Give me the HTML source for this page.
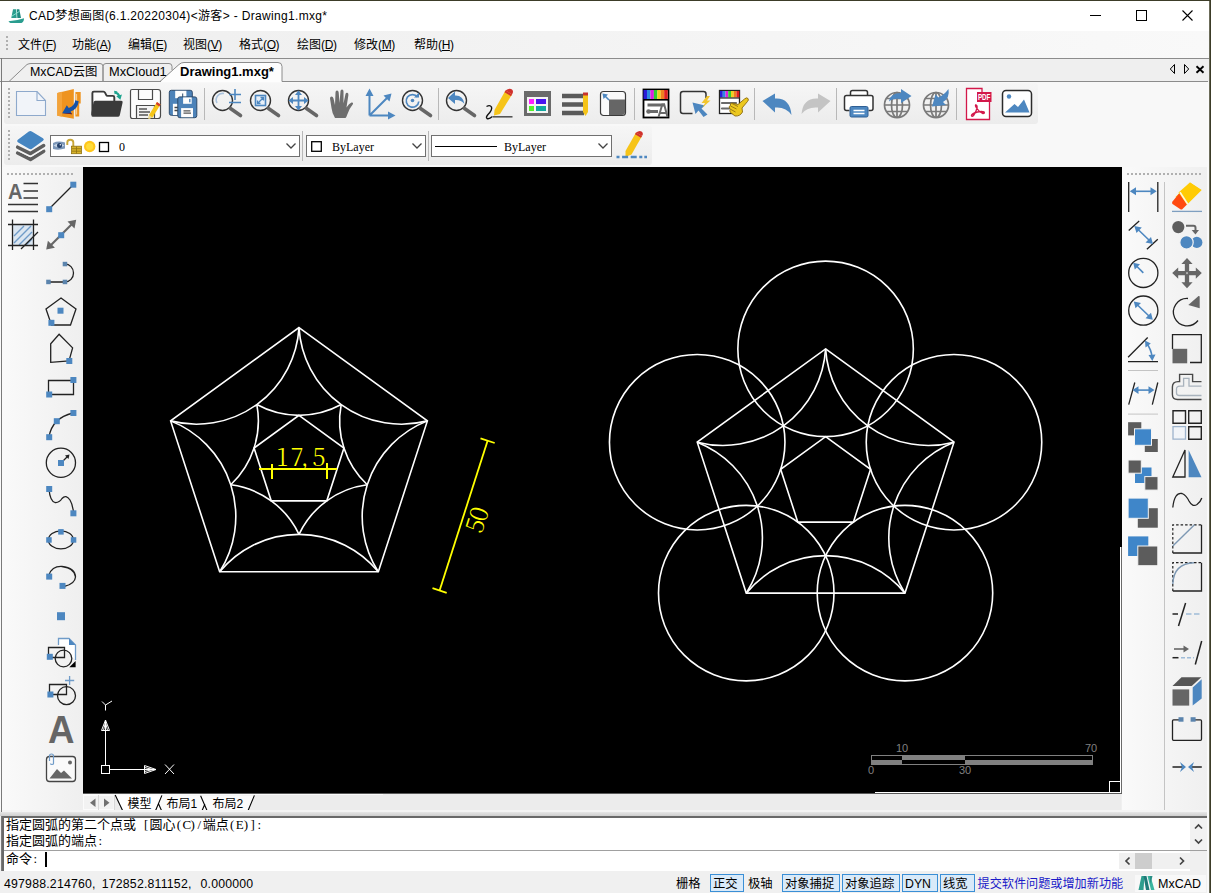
<!DOCTYPE html>
<html lang="zh-CN">
<head>
<meta charset="utf-8">
<title>CAD梦想画图</title>
<style>
*{box-sizing:border-box;margin:0;padding:0}
html,body{width:1211px;height:893px;overflow:hidden;background:#f0f0f0}
body{position:relative;font-family:"Liberation Sans","Noto Sans CJK SC",sans-serif;font-size:12px;color:#000}
.abs{position:absolute}
#win{position:absolute;left:0;top:0;width:1211px;height:893px;background:#f0f0f0;overflow:hidden}
#topline{position:absolute;left:0;top:0;width:1211px;height:1px;background:#3c3c28}
#title{position:absolute;left:0;top:1px;width:1211px;height:30px;background:#fff}
#title .txt{position:absolute;left:29px;top:7px;font-size:12px;line-height:16px;white-space:nowrap;color:#000;letter-spacing:0.33px}
#menubar{position:absolute;left:0;top:31px;width:1211px;height:27px;background:linear-gradient(to right,#eeeeee,#f9f9f9)}
#menubar .mi{position:absolute;top:6px;font-size:12px;line-height:16px;white-space:nowrap}
.ml{letter-spacing:-0.4px}
#menubar u{text-decoration:underline;text-underline-offset:1px}
.grip-v{position:absolute;width:2px;background-image:repeating-linear-gradient(to bottom,#b0b0b0 0 2px,transparent 2px 4px)}
.grip-h{position:absolute;height:2px;background-image:repeating-linear-gradient(to right,#b0b0b0 0 2px,transparent 2px 4px)}
#tabbar{position:absolute;left:0;top:58px;width:1211px;height:25px;background:#efefef;border-top:1px solid #8c8c8c}
#tabline{position:absolute;left:0;top:81px;width:1211px;height:1px;background:#8c8c8c}
.sep{position:absolute;width:1px;background:#b8b8b8}
#tb1{position:absolute;left:4px;top:83px;width:1034px;height:41px;background:linear-gradient(#f6f6f6,#ececec);border-radius:3px}
#tb2{position:absolute;left:4px;top:126px;width:648px;height:39px;background:linear-gradient(#f6f6f6,#ececec);border-radius:3px}
#tbbg{position:absolute;left:0;top:82px;width:1211px;height:85px;background:#f8f8f8}
.combo{position:absolute;height:22px;background:#fff;border:1px solid #707070}
.combo .arrow{position:absolute;right:2px;top:5px;width:12px;height:10px}
.simsun{font-family:"Liberation Serif","Noto Serif CJK SC",serif}
#leftbar{position:absolute;left:0;top:167px;width:83px;height:643px;background:linear-gradient(to right,#fafafa,#efefef)}
#rightbar{position:absolute;left:1122px;top:167px;width:89px;height:643px;background:linear-gradient(to right,#fafafa,#efefef)}
#canvas{position:absolute;left:83px;top:167px;width:1039px;height:627px;background:#000;overflow:hidden}
#laytabs{position:absolute;left:83px;top:794px;width:1038px;height:17px;background:#ececec}
#cmd{position:absolute;left:2px;top:816px;width:1205px;height:55px;background:#fff;border-top:2px solid #696969;border-left:2px solid #696969}
#status{position:absolute;left:0;top:872px;width:1211px;height:21px;background:#f0f0f0}
.icon{position:absolute;overflow:visible}
</style>
</head>
<body>
<div id="win">
<div id="title">
<svg class="icon" style="left:8px;top:7px" width="16" height="16" viewBox="0 0 16 16"><path d="M3.300 10 L5 1.200 L8.200 1.200 L8.700 10 Z" fill="#2a9d8f"/><path d="M8.900 1.200 L11.300 1.200 L13 10 L9.300 10 Z" fill="#1f8a80"/><path d="M3.600 8.300 L11.600 3.300" stroke="#8fe6d6" stroke-width="0.900"/><path d="M0.500 13.300 Q8 13 16 10.300 Q16 14 13.500 15 L2.500 15 Q1 14.500 0.500 13.300 Z" fill="#2a9d8f"/></svg>
<div class="txt">CAD梦想画图(6.1.20220304)&lt;游客&gt; - Drawing1.mxg*</div>
<svg class="icon" style="left:1090px;top:14px" width="11" height="1"><rect width="11" height="1" fill="#000"/></svg>
<svg class="icon" style="left:1136px;top:9px" width="11" height="11"><rect x="0.5" y="0.5" width="10" height="10" fill="none" stroke="#000"/></svg>
<svg class="icon" style="left:1182px;top:9px" width="11" height="11"><path d="M0.500 0.500 L10.500 10.500 M10.500 0.500 L0.500 10.500" stroke="#000" stroke-width="1.1" fill="none"/></svg>
</div>
<div id="menubar">
<div class="grip-v" style="left:6px;top:5px;height:16px"></div>
<div class="mi" style="left:18px">文件<span class="ml">(<u>F</u>)</span></div>
<div class="mi" style="left:72px">功能<span class="ml">(<u>A</u>)</span></div>
<div class="mi" style="left:128px">编辑<span class="ml">(<u>E</u>)</span></div>
<div class="mi" style="left:183px">视图<span class="ml">(<u>V</u>)</span></div>
<div class="mi" style="left:239px">格式<span class="ml">(<u>O</u>)</span></div>
<div class="mi" style="left:297px">绘图<span class="ml">(<u>D</u>)</span></div>
<div class="mi" style="left:354px">修改<span class="ml">(<u>M</u>)</span></div>
<div class="mi" style="left:414px">帮助<span class="ml">(<u>H</u>)</span></div>
</div>
<div id="tabbar">
<svg class="icon" style="left:0;top:0" width="300" height="24" viewBox="0 0 300 24">
<path d="M9 22.500 L27 5.500 Q29 4.500 31 4.500 L100 4.500 Q103 4.500 103 7.500 L103 22.500" fill="#f0f0f0" stroke="#8c8c8c"/>
<path d="M103 22.500 L103 7.500 Q103 4.500 106 4.500 L169 4.500 Q172 4.500 172 7.500 L172 11" fill="none" stroke="#8c8c8c"/>
<path d="M160 23.500 L179 5.500 Q181 3.500 184 3.500 L278 3.500 Q282 3.500 282 7.500 L282 23.500 Z" fill="#fdfdfd" stroke="none"/>
<path d="M160 22.500 L179 5.500 Q181 3.500 184 3.500 L278 3.500 Q282 3.500 282 7.500 L282 22.500" fill="none" stroke="#8c8c8c"/>
</svg>
<div class="abs" style="left:30px;top:5px;font-size:12.4px;line-height:17px;white-space:nowrap">MxCAD云图</div>
<div class="abs" style="left:109px;top:4px;font-size:12.8px;line-height:17px;white-space:nowrap">MxCloud1</div>
<div class="abs" style="left:180px;top:4px;font-size:13px;line-height:17px;font-weight:bold;white-space:nowrap">Drawing1.mxg*</div>
<svg class="icon" style="left:1168px;top:5px" width="40" height="12" viewBox="0 0 40 12"><path d="M6.500 0.500 V9.500 L2.300 5 Z" fill="none" stroke="#000" stroke-width="1"/><path d="M16.500 0.500 V9.500 L20.700 5 Z" fill="none" stroke="#000" stroke-width="1"/><path d="M28.500 2.300 L35.500 8.700 M35.500 2.300 L28.500 8.700" stroke="#000" stroke-width="1.900" fill="none"/></svg>
</div>
<div class="abs" style="left:0;top:81px;width:161px;height:1px;background:#8c8c8c"></div><div class="abs" style="left:282px;top:81px;width:926px;height:1px;background:#8c8c8c"></div>
<div id="tbbg"></div><div id="tb1"></div>
<div class="grip-v" style="left:8px;top:88px;height:30px"></div>
<div class="sep" style="left:204px;top:88px;height:32px"></div>
<div class="sep" style="left:438px;top:88px;height:32px"></div>
<div class="sep" style="left:634px;top:88px;height:32px"></div>
<div class="sep" style="left:754px;top:88px;height:32px"></div>
<div class="sep" style="left:836px;top:88px;height:32px"></div>
<div class="sep" style="left:956px;top:88px;height:32px"></div>
<svg class="icon" style="left:16px;top:88px" width="32" height="32" viewBox="0 0 32 32"><path d="M0.500 3.500 H21 L29.500 12.500 V27.500 H0.500 Z" fill="#f1f4f9" stroke="#8ea9cc" stroke-width="1.100"/><path d="M21 3.500 V12.500 H29.500" fill="none" stroke="#8ea9cc" stroke-width="1.100"/></svg>
<svg class="icon" style="left:54px;top:88px" width="32" height="32" viewBox="0 0 32 32"><path d="M3.300 4.900 L19.800 1 V30.700 L3.300 27.700 Z" fill="#ee931f"/><path d="M3.300 4.900 L8 3.800 V28.500 L3.300 27.700 Z" fill="#f3a33a"/><path d="M21.400 3.900 H26.700 V15.500 H25.200 V28.400 H21.400 Z" fill="#ee931f"/><path d="M22.600 6 V26.500" stroke="#f9d9ac" stroke-width="0.900"/><path d="M8.200 25.300 L12.800 17.300 L14.800 20.100 Q20.500 18 21.300 12.300 L24.700 13.300 Q23.800 21.200 16.600 23.600 L18 26.300 Z" fill="#1552a8"/><path d="M8.200 25.300 L18 26.300 L17.300 25 Z" fill="#7a2020"/></svg>
<svg class="icon" style="left:92px;top:88px" width="32" height="32" viewBox="0 0 32 32"><path d="M0.400 27 V5 Q0.400 3.600 1.800 3.600 H11.500 Q12.500 3.600 13 4.600 L14.300 7.200 Q14.600 7.900 15.600 7.900 H20.800 Q22.300 7.900 22.300 9.400 V13" fill="#fdfdfd" stroke="#3a3a3a" stroke-width="1.900" stroke-linejoin="round"/><path d="M3.300 12.800 H29.300 Q31 12.800 30.600 14.500 L27.800 27.200 Q27.400 28.700 25.800 28.700 H1 Q-0.600 28.700 -0.600 27.200 V25 L1.500 14.300 Q1.800 12.800 3.300 12.800 Z" fill="#3a3a3a"/><path d="M22.800 4.300 Q26.500 5 27.300 8.500" fill="none" stroke="#1ea48f" stroke-width="2.200"/><path d="M24.300 8.300 L29.900 6.500 L28.400 11.800 Z" fill="#1ea48f"/><path d="M22 2.700 L25.500 3.500 L22.800 6.300 Z" fill="#1ea48f"/></svg>
<svg class="icon" style="left:130px;top:88px" width="32" height="32" viewBox="0 0 32 32"><path d="M2 1.5 H28 Q30.5 1.5 30.5 4 V28 Q30.5 30.5 28 30.5 H2.5 Q0.5 30.5 0.5 28.5 V3 Q0.5 1.5 2 1.5 Z" fill="#fcfcfc" stroke="#4a4a4a" stroke-width="1.2"/><path d="M8.5 1.5 V11.5 H22.5 V1.5" fill="none" stroke="#4a4a4a" stroke-width="1.2"/><path d="M6.5 30 V17.5 H24.5 V30" fill="#f3f3f3" stroke="#4a4a4a" stroke-width="1.2"/><path d="M9 21 H17 M9 24 H20 M9 27 H18" stroke="#555" stroke-width="1.6"/><path d="M27 14 L30.5 16.5 L22.5 29.5 L18.5 31 L19 27 Z" fill="#f5c518"/><path d="M27 14 L30.5 16.5 L29.3 18.5 L25.8 16 Z" fill="#d43a2f"/><path d="M18.5 31 L19 27 L22.5 29.5 Z" fill="#e8d9a0"/></svg>
<svg class="icon" style="left:168px;top:88px" width="32" height="32" viewBox="0 0 32 32"><rect x="1.300" y="2.300" width="23" height="25" rx="2" fill="#4d83b9" stroke="#2d4a6b" stroke-width="1"/><rect x="7.200" y="2.800" width="11.200" height="7.400" fill="#fdfdfd"/><rect x="4.900" y="15.800" width="6" height="11.200" fill="#fdfdfd"/><path d="M6.500 19.500 H10 M6.500 22.500 H10" stroke="#444" stroke-width="1.300"/><rect x="9.800" y="8.900" width="19" height="20.800" rx="2" fill="#4d83b9" stroke="#2d4a6b" stroke-width="1"/><rect x="15.100" y="9.400" width="8.600" height="6.400" fill="#fdfdfd"/><rect x="21.100" y="10.900" width="1.400" height="3.400" fill="#4d83b9"/><path d="M14.700 5.500 V9" stroke="#2d4a6b" stroke-width="1"/><rect x="13.100" y="20.100" width="11.900" height="9.100" fill="#fdfdfd"/><path d="M15.500 22.800 H22.400 M15.500 25.200 H23" stroke="#555" stroke-width="1.200"/></svg>
<svg class="icon" style="left:212px;top:88px" width="32" height="32" viewBox="0 0 32 32"><circle cx="10.5" cy="12.5" r="10" fill="none" stroke="#333333" stroke-width="1.4"/><path d="M18.5 20.5 L28.5 27.5" stroke="#666666" stroke-width="3.6" stroke-linecap="round"/><path d="M5 15 A6.5 6.5 0 0 1 12 5.5" fill="none" stroke="#a9c3de" stroke-width="1.6"/><path d="M17 6.5 H29 M23 1 V12 M17 14.5 H29" stroke="#4d87c0" stroke-width="1.6"/></svg>
<svg class="icon" style="left:250px;top:88px" width="32" height="32" viewBox="0 0 32 32"><circle cx="10.5" cy="12.5" r="10" fill="none" stroke="#333333" stroke-width="1.4"/><path d="M18.5 20.5 L28.5 27.5" stroke="#666666" stroke-width="3.6" stroke-linecap="round"/><rect x="5.5" y="7.5" width="10" height="10" fill="#e8f0f8" stroke="#4d87c0" stroke-width="1.6"/><path d="M8 15 L13 10 M10.5 9.5 H13.5 V12.5 M7.5 12.5 V15.5 H10.5" stroke="#4d87c0" stroke-width="1.3" fill="none"/></svg>
<svg class="icon" style="left:288px;top:88px" width="32" height="32" viewBox="0 0 32 32"><circle cx="10.5" cy="12.5" r="10" fill="none" stroke="#333333" stroke-width="1.4"/><path d="M18.5 20.5 L28.5 27.5" stroke="#666666" stroke-width="3.6" stroke-linecap="round"/><path d="M10.5 5 V20 M3 12.5 H18" stroke="#4d87c0" stroke-width="1.8"/><path d="M10.5 2.5 L14 7 H7 Z M10.5 22.5 L14 18 H7 Z M0.5 12.5 L5 9 V16 Z M20.5 12.5 L16 9 V16 Z" fill="#4d87c0"/></svg>
<svg class="icon" style="left:326px;top:88px" width="32" height="32" viewBox="0 0 32 32"><path d="M9 30 Q6 25 5.5 20 L4 10.5 Q4 8.5 5.5 8.5 Q7 8.5 7.5 10.5 L9 17 L9.5 4.5 Q9.5 2.5 11 2.5 Q12.5 2.5 12.7 4.5 L13.5 15 L14.5 3 Q14.7 1.5 16 1.5 Q17.5 1.5 17.5 3.5 L17.5 15.5 L19.5 6 Q20 4.5 21.3 4.8 Q22.6 5.1 22.4 7 L20.5 19.5 Q23 15.5 25.5 14.5 Q27.5 14 27 16 Q23 21 21.5 26 Q20.5 29 19.5 30 Z" fill="#6e6e6e"/></svg>
<svg class="icon" style="left:364px;top:88px" width="32" height="32" viewBox="0 0 32 32"><path d="M5.5 27.5 V5 M5.5 27.5 H27 M5.5 27.5 L24 9" stroke="#4d87c0" stroke-width="2" fill="none"/><path d="M5.5 0.5 L9.5 8 H1.5 Z M31.5 27.5 L24 23.5 V31.5 Z M27.5 5.5 L19.5 7.5 L25.5 13.5 Z" fill="#4d87c0"/></svg>
<svg class="icon" style="left:402px;top:88px" width="32" height="32" viewBox="0 0 32 32"><circle cx="10.5" cy="12.5" r="10" fill="none" stroke="#333333" stroke-width="1.4"/><path d="M18.5 20.5 L28.5 27.5" stroke="#666666" stroke-width="3.6" stroke-linecap="round"/><path d="M15.5 9 A6.3 6.3 0 1 0 16.8 13.5" fill="none" stroke="#4d87c0" stroke-width="1.7"/><path d="M12 9.5 H17 V4.5 Z" fill="#4d87c0"/><circle cx="10.5" cy="12.5" r="1.8" fill="#4d87c0"/></svg>
<svg class="icon" style="left:446px;top:88px" width="32" height="32" viewBox="0 0 32 32"><circle cx="10.5" cy="12.5" r="10" fill="none" stroke="#333333" stroke-width="1.4"/><path d="M18.5 20.5 L28.5 27.5" stroke="#666666" stroke-width="3.6" stroke-linecap="round"/><path d="M2 10 L9 3.5 V7.5 Q17 7 18.5 16 Q15 11.5 9 12 V16 Z" fill="#4d87c0"/></svg>
<svg class="icon" style="left:484px;top:88px" width="32" height="32" viewBox="0 0 32 32"><path d="M2.500 18.500 Q6 16.500 7.500 19 Q8.500 22 4 26.500 Q1.500 29.500 3 30.500 Q5 31.500 8.500 28.500" fill="none" stroke="#111" stroke-width="1.400"/><path d="M9 28.800 H28.500" stroke="#555" stroke-width="1.600"/><path d="M21.5 2.5 L28 6.5 L16 26 L10 27.5 L10.5 22 Z" fill="#f6c419"/><path d="M21.5 2.5 Q25.5 -0.5 28 1.5 Q30 3.5 28 6.5 Z" fill="#d0312d"/><path d="M21.5 2.5 L28 6.5 L27 8.2 L20.5 4.2 Z" fill="#d0312d"/></svg>
<svg class="icon" style="left:522px;top:88px" width="32" height="32" viewBox="0 0 32 32"><rect x="2" y="3" width="27" height="25" fill="#6a6a6a"/><rect x="5" y="9" width="21" height="16" fill="#f4f4f4"/><rect x="7" y="11" width="5" height="5" fill="#ff20ff"/><rect x="14" y="11" width="10" height="5" fill="#4a14f0"/><rect x="7" y="18" width="5" height="5" fill="#55f22a"/><rect x="14" y="18" width="10" height="5" fill="#12a8a0"/></svg>
<svg class="icon" style="left:560px;top:88px" width="32" height="32" viewBox="0 0 32 32"><path d="M2 8 H24 M2 16.5 H24 M2 25 H24" stroke="#5a5a5a" stroke-width="4.6"/><path d="M23 6 H28 V24 L25.5 28 L23 24 Z" fill="#f6c419"/><rect x="23" y="4.5" width="5" height="3" fill="#c8322d"/></svg>
<svg class="icon" style="left:598px;top:88px" width="32" height="32" viewBox="0 0 32 32"><rect x="2.5" y="3.5" width="25" height="24" rx="3" fill="#fafafa" stroke="#3a3a3a" stroke-width="1.2"/><path d="M11 11.5 H27 V24 Q27 27 24 27 H11 Z" fill="#666"/><path d="M11 12 L6.5 7.5" stroke="#4d87c0" stroke-width="1.6"/><path d="M4.5 5.5 L10 6.5 L5.5 11 Z" fill="#4d87c0"/></svg>
<svg class="icon" style="left:642px;top:88px" width="32" height="32" viewBox="0 0 32 32"><rect x="1.500" y="1.500" width="25" height="28" fill="#fff" stroke="#000" stroke-width="1.800"/><rect x="1.5" y="2" width="3.5" height="9.500" fill="#2a1ad8"/><rect x="4.95" y="2" width="3.5" height="9.500" fill="#2f8ae0"/><rect x="8.4" y="2" width="3.5" height="9.500" fill="#e020e0"/><rect x="11.85" y="2" width="3.5" height="9.500" fill="#30d030"/><rect x="15.3" y="2" width="3.5" height="9.500" fill="#f0d020"/><rect x="18.75" y="2" width="3.5" height="9.500" fill="#f08020"/><rect x="22.2" y="2" width="3.5" height="9.500" fill="#e02020"/><path d="M1.500 11.800 H26.500" stroke="#000" stroke-width="1.600"/><path d="M5.500 17 H23 M8 23.500 H16" stroke="#6a6a6a" stroke-width="2.800"/><circle cx="6.500" cy="23.500" r="2.300" fill="#6a6a6a"/><path d="M16.500 29 L20.300 16.500 H22.200 L25.500 29 M18 25 H24" stroke="#6a6a6a" stroke-width="2" fill="none"/></svg>
<svg class="icon" style="left:680px;top:88px" width="32" height="32" viewBox="0 0 32 32"><path d="M26 10 V6 Q26 3.500 23.500 3.500 H3 Q0.500 3.500 0.500 6 V23 Q0.500 25.500 3 25.500 H12.500" fill="none" stroke="#333" stroke-width="1.500"/><path d="M12.500 14.500 L25 17.500 L21.500 20.500 L27.500 26.500 L23.500 29 L18.500 22.500 L15.500 26 Z" fill="#4d87c0"/><path d="M27 8 L21.500 15 H25 L22.500 19.500 L30.500 12.500 H27 L30 8 Z" fill="#f3c62c"/></svg>
<svg class="icon" style="left:718px;top:88px" width="32" height="32" viewBox="0 0 32 32"><rect x="1.5" y="2.5" width="20" height="23" fill="#fff" stroke="#222" stroke-width="1.3"/><rect x="2" y="3" width="2.8" height="6.5" fill="#2a1ad8"/><rect x="4.75" y="3" width="2.8" height="6.5" fill="#2f8ae0"/><rect x="7.5" y="3" width="2.8" height="6.5" fill="#e020e0"/><rect x="10.25" y="3" width="2.8" height="6.5" fill="#30d030"/><rect x="13" y="3" width="2.8" height="6.5" fill="#f0d020"/><rect x="15.75" y="3" width="2.8" height="6.5" fill="#f08020"/><rect x="18.5" y="3" width="2.8" height="6.5" fill="#e02020"/><path d="M1.5 10 H21.5" stroke="#222" stroke-width="1.2"/><path d="M4 15 H18 M4 20.5 H12" stroke="#6a6a6a" stroke-width="2.2" stroke-linecap="round"/><path d="M26.5 11 Q28.5 9 30 10.5 Q31 12 29.5 13.5 L24 20 L24.5 24 Q22 28.5 17 28 L12.5 24.5 Q11 22.5 12.5 21.5 L11.5 20 Q10.5 18 12.5 17.5 Q11.5 15.5 14 15 L20 16.5 Z" fill="#ecc81e" stroke="#8a6a10" stroke-width="0.9"/><path d="M13 21.5 L17.5 24 M12.5 18 L18.5 21 M14 15.5 L20 18.5" stroke="#8a6a10" stroke-width="0.8" fill="none"/></svg>
<svg class="icon" style="left:762px;top:88px" width="32" height="32" viewBox="0 0 32 32"><path d="M0.5 13 L13 5.5 V10.5 Q28 9.5 29.5 27 Q24 18.5 13 19.5 V24.5 Z" fill="#4d87c0"/></svg>
<svg class="icon" style="left:800px;top:88px" width="32" height="32" viewBox="0 0 32 32"><path d="M30.5 13 L18 5.5 V10.5 Q3 9.5 1.5 26 Q7 18.5 18 19.5 V24.5 Z" fill="#c4c4c4"/></svg>
<svg class="icon" style="left:843px;top:88px" width="32" height="32" viewBox="0 0 32 32"><path d="M7.5 7 V4.5 Q7.5 2.5 9.5 2.5 H22.5 Q24.5 2.5 24.5 4.5 V7" fill="#fff" stroke="#333" stroke-width="1.5"/><path d="M6.5 22.5 H3.5 Q1.5 22.5 1.5 20.5 V9.5 Q1.5 7.5 3.5 7.5 H28 Q30 7.5 30 9.5 V20.5 Q30 22.5 28 22.5 H25.5" fill="#fff" stroke="#333" stroke-width="1.5"/><rect x="7" y="18.5" width="18" height="10.5" rx="1.5" fill="#4d87c0" stroke="#2f5f94" stroke-width="1"/><path d="M10.5 22.5 H21.5 M10.5 25.5 H21.5" stroke="#fff" stroke-width="1.4"/></svg>
<svg class="icon" style="left:882.5px;top:88px" width="32" height="32" viewBox="0 0 32 32"><g fill="none" stroke="#7a7a7a" stroke-width="1.7"><circle cx="14" cy="17" r="12.5"/><ellipse cx="14" cy="17" rx="5.5" ry="12.5"/><path d="M14 4.5 V29.5 M1.5 17 H26.5 M3.5 10.5 H24.5 M3.5 23.5 H24.5"/></g><path d="M6 13.5 Q7 5 18 5 V1 L28.5 8 L18 15 V11 Q10 10 6 13.5 Z" fill="#4d87c0"/></svg>
<svg class="icon" style="left:921.5px;top:88px" width="32" height="32" viewBox="0 0 32 32"><g fill="none" stroke="#7a7a7a" stroke-width="1.7"><circle cx="14" cy="17" r="12.5"/><ellipse cx="14" cy="17" rx="5.5" ry="12.5"/><path d="M14 4.5 V29.5 M1.5 17 H26.5 M3.5 10.5 H24.5 M3.5 23.5 H24.5"/></g><path d="M26.5 1 Q28 10 21 14 L24 17 L10 18.5 L13.5 6.5 L16.5 9.5 Q22 7 26.5 1 Z" fill="#4d87c0"/></svg>
<svg class="icon" style="left:963px;top:88px" width="32" height="32" viewBox="0 0 32 32"><path d="M3.5 0.5 H19 V9 H26.500 V31.5 H3.5 Z" fill="#fff" stroke="#d3184a" stroke-width="1.3"/><rect x="14" y="4" width="14.5" height="10" fill="#d3184a"/><text x="21.2" y="12.2" font-family="'Liberation Sans',sans-serif" font-size="8.5" font-weight="bold" fill="#fff" text-anchor="middle" textLength="12.5" lengthAdjust="spacingAndGlyphs">PDF</text><path d="M12.5 17 Q14.5 17 14 20 Q13.5 23 10.5 27.5 Q9 29 8.5 27.5 Q9 25.5 14.5 24 Q19 23 21 24 Q22 25.5 20 25.5 Q16 24 13.5 20 Q12 17.5 12.5 17 Z" fill="none" stroke="#d3184a" stroke-width="1.4"/></svg>
<svg class="icon" style="left:1001px;top:88px" width="32" height="32" viewBox="0 0 32 32"><rect x="1.5" y="2.5" width="29" height="26" rx="3.5" fill="#fff" stroke="#2b2b2b" stroke-width="1.5"/><circle cx="8" cy="8.5" r="2.2" fill="#4d87c0"/><path d="M4 24.500 L13.500 16 L17 19 L23 11.5 L28.500 24.500 Z" fill="#4d87c0"/></svg><div id="tb2"></div>
<div class="grip-v" style="left:8px;top:130px;height:30px"></div>
<svg class="icon" style="left:16px;top:130px" width="30" height="32" viewBox="16 130 30 32">
<path d="M17.600 153 L30.500 159.400 L43.700 151.200" fill="none" stroke="#5e5e5e" stroke-width="3.500" stroke-linejoin="round" stroke-linecap="round"/>
<path d="M17.600 147.600 L30.500 154 L43.700 146" fill="none" stroke="#f6f6f6" stroke-width="6" stroke-linejoin="round" stroke-linecap="round"/>
<path d="M17.600 147.200 L30.500 153.600 L43.700 145.600" fill="none" stroke="#5e5e5e" stroke-width="3.500" stroke-linejoin="round" stroke-linecap="round"/>
<path d="M28.800 131.500 Q30.300 130.600 31.800 131.500 L43 138.300 Q44.800 139.500 43 140.800 L32 148.700 Q30.500 149.800 29 148.800 L17.800 142.300 Q16.300 141.200 17.800 139.800 Z" fill="#f6f6f6" stroke="#f6f6f6" stroke-width="2"/>
<path d="M28.800 131.500 Q30.300 130.600 31.800 131.500 L43 138.300 Q44.800 139.500 43 140.800 L32 148.700 Q30.500 149.800 29 148.800 L17.800 142.300 Q16.300 141.200 17.800 139.800 Z" fill="#4585c1"/>
</svg>
<div class="combo" style="left:50px;top:135px;width:250px;height:22px">
<svg class="icon" style="left:0;top:0" width="62" height="20" viewBox="51 136 62 20">
<path d="M53 143 Q58 140.500 65 142.500 V148.500 Q59 150.500 53 149 Z" fill="#7d97b8"/><path d="M53.500 145.500 Q59 141.500 64.500 145.500 Q59 149.500 53.500 145.500 Z" fill="#c3d2e4"/><circle cx="59.500" cy="145.500" r="2.500" fill="#23406a"/><circle cx="60.300" cy="144.700" r="0.700" fill="#fff"/>
<path d="M67.300 145 V142.500 Q67.300 139.800 70.300 139.800 Q73.300 139.800 73.300 142.500 V146.500" fill="none" stroke="#c9a73a" stroke-width="1.900"/><rect x="71.500" y="146.200" width="10" height="7.500" fill="#d9b32a" stroke="#8f7210" stroke-width="0.800"/><path d="M72 148.700 H81 M72 151.200 H81 M76.500 146.500 V153.500" stroke="#8f7210" stroke-width="0.800"/>
<circle cx="89.700" cy="146.500" r="5.700" fill="#ffc61a"/><circle cx="89.700" cy="146.500" r="3.600" fill="#ffdc3a"/>
<rect x="99.500" y="142.500" width="9" height="9" fill="#fff" stroke="#000" stroke-width="1.300"/>
</svg>
<div class="abs simsun" style="left:68px;top:3px;font-size:12px;line-height:16px">0</div>
<svg class="arrow" viewBox="0 0 12 10"><path d="M1.500 2.500 L6 7 L10.500 2.500" fill="none" stroke="#444" stroke-width="1.300"/></svg>
</div>
<div class="sep" style="left:302px;top:131px;height:30px"></div>
<div class="combo" style="left:306px;top:135px;width:120px;height:22px">
<svg class="icon" style="left:4px;top:5px" width="11" height="11"><rect x="0.700" y="0.700" width="9.600" height="9.600" fill="#fff" stroke="#000" stroke-width="1.300"/></svg>
<div class="abs simsun" style="left:25px;top:3px;font-size:12px;line-height:16px">ByLayer</div>
<svg class="arrow" viewBox="0 0 12 10"><path d="M1.500 2.500 L6 7 L10.500 2.500" fill="none" stroke="#444" stroke-width="1.300"/></svg>
</div>
<div class="sep" style="left:428px;top:131px;height:30px"></div>
<div class="combo" style="left:431px;top:135px;width:181px;height:22px">
<div class="abs" style="left:3px;top:10px;width:62px;height:1px;background:#000"></div>
<div class="abs simsun" style="left:72px;top:3px;font-size:12px;line-height:16px">ByLayer</div>
<svg class="arrow" viewBox="0 0 12 10"><path d="M1.500 2.500 L6 7 L10.500 2.500" fill="none" stroke="#444" stroke-width="1.300"/></svg>
</div>
<svg class="icon" style="left:616px;top:130px" width="32" height="32" viewBox="0 0 32 32">
<path d="M20 2.500 L26 6 L15.500 24.500 L9.500 27 L9.500 21 Z" fill="#f6c419"/><path d="M20 2.500 Q23.500 0 25.500 1.500 Q28 3.500 26 6 Z" fill="#d0312d"/><path d="M20 2.500 L26 6 L25 7.800 L19 4.300 Z" fill="#d0312d"/>
<path d="M0.500 27 H31" stroke="#4d87c0" stroke-width="2.600" stroke-dasharray="3 2.600 6 2.600 6 2.600 3 2"/>
</svg>
<div id="leftbar"><div class="grip-h" style="left:7px;top:6px;width:67px"></div><svg class="icon" style="left:0;top:0" width="83" height="643" viewBox="0 167 83 643"><text x="8" y="198.800" font-family="'Liberation Sans',sans-serif" font-size="22.500" font-weight="bold" fill="#666" textLength="14.500" lengthAdjust="spacingAndGlyphs">A</text>
<path d="M23.5 183.5 H38 M23.5 191 H38 M23.500 198 H38 M8 204.5 H38 M8 211.5 H38" stroke="#333" stroke-width="1.4" fill="none" />
<path d="M49 209 L73 185" stroke="#222" stroke-width="1.3" fill="none" />
<rect x="70.3" y="181.7" width="6.0" height="6.0" fill="#4d87c0"/>
<rect x="46.2" y="206.2" width="6.0" height="6.0" fill="#4d87c0"/>
<rect x="13" y="225" width="20" height="20" fill="#dbe6f1"/>
<path d="M14 236 L24 226 M14 243 L31 226 M19 245 L32 232 M26 245 L32 239" stroke="#6f9bc8" stroke-width="1.4" fill="none" />
<path d="M12.5 219.500 V250 M33.500 219.500 V250 M8 224.5 H38 M8 245.5 H38" stroke="#222" stroke-width="1.3" fill="none" />
<path d="M38 232 L21 249" stroke="#222" stroke-width="1.3" fill="none" />
<path d="M50 246 L72.500 223.500" stroke="#666" stroke-width="2.2" fill="none" />
<path d="M76.2 219.7 L74.5 228.5 L67.500 221.500 Z M46.2 249.6 L47.9 240.8 L54.9 247.8 Z" fill="#666"/>
<rect x="58.2" y="232.2" width="6.0" height="6.0" fill="#4d87c0"/>
<path d="M48 282 H65 A8.5 9 0 0 0 65 264" stroke="#222" stroke-width="1.3" fill="none" />
<rect x="46.2" y="279.7" width="4.5" height="4.5" fill="#5b84ad"/>
<rect x="62.7" y="279.7" width="4.5" height="4.5" fill="#5b84ad"/>
<rect x="62.7" y="261.8" width="4.5" height="4.5" fill="#5b84ad"/>
<path d="M61 298 L76 309 L70.500 325 H51.500 L46 309 Z" stroke="#222" stroke-width="1.3" fill="none" />
<rect x="57.5" y="307.7" width="6.0" height="6.0" fill="#4d87c0"/>
<rect x="48.4" y="319.8" width="6.0" height="6.0" fill="#4d87c0"/>
<path d="M59.1 334.3 L72.6 347.9 L69 360.8 L50.7 362.3 L50.7 343.8 Z" stroke="#222" stroke-width="1.3" fill="none" />
<rect x="66.3" y="358.0" width="6.0" height="6.0" fill="#4d87c0"/>
<path d="M48.500 380.500 H73.500 V394.500 H48.500 Z" stroke="#222" stroke-width="1.3" fill="none" />
<rect x="70.4" y="377.0" width="6.0" height="6.0" fill="#4d87c0"/>
<rect x="46.2" y="391.5" width="6.0" height="6.0" fill="#4d87c0"/>
<path d="M49 437 Q52 418 73 413" stroke="#222" stroke-width="1.3" fill="none" />
<rect x="70.4" y="410.0" width="6.0" height="6.0" fill="#4d87c0"/>
<rect x="53.8" y="418.2" width="6.0" height="6.0" fill="#4d87c0"/>
<rect x="46.2" y="434.2" width="6.0" height="6.0" fill="#4d87c0"/>
<circle cx="60.9" cy="462.8" r="14.6" fill="none" stroke="#222" stroke-width="1.3"/>
<path d="M61 463 L68 456" stroke="#222" stroke-width="1.3" fill="none" />
<path d="M69.5 454.5 L68.5 459 L65 455.5 Z" fill="#222"/>
<rect x="58.0" y="460.0" width="6.0" height="6.0" fill="#4d87c0"/>
<path d="M49 489 Q50 501 55 502.5 Q59 503 62 498.500 Q66 494 70 500 Q72.500 504 73.500 512" stroke="#222" stroke-width="1.3" fill="none" />
<rect x="46.2" y="486.0" width="6.0" height="6.0" fill="#4d87c0"/>
<rect x="70.4" y="510.3" width="6.0" height="6.0" fill="#4d87c0"/>
<ellipse cx="60.9" cy="539.9" rx="12.5" ry="9" fill="none" stroke="#222" stroke-width="1.3"/>
<rect x="46.2" y="537.2" width="5.5" height="5.5" fill="#4d87c0"/>
<rect x="58.2" y="529.1" width="5.5" height="5.5" fill="#4d87c0"/>
<rect x="70.8" y="537.2" width="5.5" height="5.5" fill="#4d87c0"/>
<path d="M49 575 Q52 566 62 566.5 Q75 568 75.500 577 Q75 584 64 586.5" stroke="#222" stroke-width="1.3" fill="none" />
<rect x="46.2" y="573.6" width="6.0" height="6.0" fill="#4d87c0"/>
<rect x="59.5" y="582.9" width="6.0" height="6.0" fill="#4d87c0"/>
<rect x="57.0" y="612.2" width="8.0" height="8.0" fill="#4d87c0"/>
<path d="M58.500 645 V638.500 H69 L75.500 645 V660" fill="#fff" stroke="#6f9bc8" stroke-width="1.3"/><path d="M69 638.5 V645 H75.500 Z" fill="#4d87c0"/>
<path d="M48.500 647.500 H64.500 V657.500 H48.500 Z" stroke="#222" stroke-width="1.3" fill="none" />
<circle cx="63.5" cy="658.5" r="8.3" fill="none" stroke="#222" stroke-width="1.3"/>
<rect x="46.8" y="653.8" width="6.0" height="6.0" fill="#4d87c0"/>
<path d="M75.6 661 V667.300 H69.300 Z" fill="#000"/>
<path d="M49.500 684.500 H66.500 V694.500 H49.500 Z" stroke="#222" stroke-width="1.3" fill="none" />
<circle cx="66.5" cy="695.7" r="9" fill="none" stroke="#222" stroke-width="1.3"/>
<path d="M69.600 676 V685 M65 680.500 H74.2" stroke="#6f9bc8" stroke-width="1.3" fill="none" />
<rect x="47.4" y="691.5" width="6.0" height="6.0" fill="#4d87c0"/>
<text x="48" y="743" font-family="'Liberation Sans',sans-serif" font-size="38" font-weight="bold" fill="#666" textLength="26.500" lengthAdjust="spacingAndGlyphs">A</text>
<rect x="46.500" y="756.500" width="29" height="25" rx="3" fill="#fafafa" stroke="#444" stroke-width="1.3"/>
<circle cx="70" cy="762.5" r="2" fill="#666"/><path d="M49.500 778.500 L57 769 L61 773 L64 770.500 L72 778.500 Z" fill="#666"/>
<path d="M49.500 761 V756 Q49.500 754 51.500 754 Q53.500 754 53.500 756 V763.500 Q53.500 764.500 52 764.500 Q50.500 764.500 50.500 763.500" stroke="#6f9bc8" stroke-width="1.2" fill="none" /></svg></div><div id="rightbar"><div class="grip-h" style="left:5px;top:6px;width:75px"></div><svg class="icon" style="left:0;top:0" width="89" height="643" viewBox="1122 167 89 643"><path d="M1164.5 182 V810" stroke="#c4c4c4" stroke-width="1" fill="none" />
<path d="M1128.7 182 V212 M1157.800 182 V212" stroke="#222" stroke-width="1.3" fill="none" />
<path d="M1133 191.300 H1153.500" stroke="#4d87c0" stroke-width="1.6" fill="none" />
<path d="M1129.8 191.3 L1136 187.300 V195.300 Z M1156.7 191.3 L1150.500 187.300 V195.300 Z" fill="#4d87c0"/>
<path d="M1190 182.500 L1201.500 190 L1187 204.500 L1175.500 197 Z" fill="#ffcb05"/>
<path d="M1179.500 193 L1187 204.500 L1182.500 209 Q1181.5 210 1180 209 L1172.500 204 Q1171.5 203 1172.500 201.500 Z" fill="#ff4a10"/>
<path d="M1190 182.500 L1201.500 190 L1187 204.500 L1178.500 192.500 Z" fill="#ffcb05"/>
<path d="M1180 192.300 L1187.800 204.200" stroke="#fff6e0" stroke-width="1.6" fill="none" />
<path d="M1172 211.400 H1202" stroke="#7f9fc0" stroke-width="1.3" fill="none" />
<path d="M1128.7 230.5 L1139.2 221 M1146.900 249.300 L1157.800 239.200" stroke="#222" stroke-width="1.3" fill="none" />
<path d="M1137 228.500 L1150.500 241.500" stroke="#4d87c0" stroke-width="1.6" fill="none" />
<path d="M1134.300 226 L1141.800 227.5 L1136.500 233 Z M1153 244 L1145.5 242.5 L1151 237 Z" fill="#4d87c0"/>
<circle cx="1178.3" cy="227.1" r="6.100" fill="#5e5e5e"/>
<path d="M1186 225.800 H1193.500 Q1195.500 225.800 1195.500 227.800 V231" stroke="#666" stroke-width="2" fill="none" />
<path d="M1191.700 230 H1199 L1195.400 234.500 Z" fill="#666"/>
<circle cx="1196.800" cy="242.400" r="5.600" fill="#4d87c0"/><circle cx="1186.500" cy="242.400" r="6.700" fill="#4d87c0" stroke="#f4f4f4" stroke-width="1.200"/>
<circle cx="1143.3" cy="272.9" r="14.600" fill="none" stroke="#222" stroke-width="1.3"/>
<path d="M1143.3 272.9 L1136.500 266" stroke="#4d87c0" stroke-width="1.6" fill="none" />
<path d="M1133.2 262.800 L1140 264.300 L1134.800 269.500 Z" fill="#4d87c0"/>
<path d="M1187 262 V284 M1176 273.100 H1198" stroke="#666" stroke-width="4.3" fill="none" />
<path d="M1187 258 L1192.600 264 H1181.400 Z M1187 288.200 L1192.600 282.200 H1181.400 Z M1172.200 273.100 L1178.200 267.500 V278.700 Z M1201.800 273.100 L1195.800 267.500 V278.700 Z" fill="#666"/>
<rect x="1186.0" y="272.1" width="2.0" height="2.0" fill="#aaa" />
<circle cx="1143.3" cy="310.6" r="14.600" fill="none" stroke="#222" stroke-width="1.3"/>
<path d="M1137 304.500 L1149.500 316.500" stroke="#4d87c0" stroke-width="1.6" fill="none" />
<path d="M1133.800 301.500 L1141 303 L1135.500 308.300 Z M1152.800 319.700 L1145.5 318.200 L1151 312.800 Z" fill="#4d87c0"/>
<path d="M1188 298.500 A13.700 13.700 0 1 0 1198 320.500" stroke="#222" stroke-width="1.3" fill="none" />
<path d="M1188.300 305 L1198.500 296 Q1199.700 295.500 1199.700 297 V308.300 Z" fill="#666"/>
<path d="M1128.1 357.3 L1147.700 337.500 M1128 361.700 H1158" stroke="#222" stroke-width="1.3" fill="none" />
<path d="M1146.800 343.500 Q1151.5 350 1152 357" stroke="#4d87c0" stroke-width="1.6" fill="none" />
<path d="M1145 340.500 L1150.800 343.500 L1145.500 347.500 Z M1152.300 361 L1148.500 355 L1155.500 354.500 Z" fill="#4d87c0"/>
<path d="M1128 370.500 H1158" stroke="#c4c4c4" stroke-width="1" fill="none" />
<path d="M1172.500 349 V334.700 H1201.300 V362.500 H1190" stroke="#222" stroke-width="1.3" fill="none" />
<rect x="1172.5" y="348.8" width="14.7" height="14.5" fill="#666" />
<path d="M1134.800 382.500 L1128.700 404.700 M1157.800 382.500 L1152.300 404.700" stroke="#222" stroke-width="1.3" fill="none" />
<path d="M1136 390.100 H1151" stroke="#4d87c0" stroke-width="1.6" fill="none" />
<path d="M1132.500 390.100 L1138.500 386.300 V394 Z M1154.500 390.100 L1148.500 386.300 V394 Z" fill="#4d87c0"/>
<path d="M1128 414.100 H1158" stroke="#c4c4c4" stroke-width="1" fill="none" />
<path d="M1201.500 381.600 H1192.600 V374.400 H1179.600 V381.600 H1178 Q1172.400 381.600 1172.400 387 V394.500 Q1172.400 399.500 1177.500 399.500 H1201.500" stroke="#484848" stroke-width="1.4" fill="none" />
<path d="M1201.500 386.100 H1189 V378.400 H1183.600 V386.100 H1180 Q1176.500 386.100 1176.500 389 V393 Q1176.500 395.500 1179.500 395.500 H1201.500" stroke="#a9b3bd" stroke-width="1.3" fill="none" />
<path d="M1173 410.700 H1185.500 V423.200 H1173 Z M1188.700 410.700 H1201.300 V423.200 H1188.700 Z M1188.700 426.700 H1201.300 V439.200 H1188.700 Z" stroke="#222" stroke-width="1.4" fill="none" />
<path d="M1173 426.700 H1185.500 V439.200 H1173 Z" stroke="#9db3cc" stroke-width="1.3" fill="#f1f4f8" />
<rect x="1128.1" y="422.2" width="13.2" height="13.2" fill="#5c5c5c" />
<rect x="1144.8" y="439.0" width="13.0" height="13.0" fill="#5c5c5c" />
<rect x="1134.5" y="428.8" width="17.0" height="16.5" fill="#3f86c9" stroke="#f4f4f4" stroke-width="1"/>
<path d="M1172.800 477 L1185 450 V477 Z" stroke="#222" stroke-width="1.3" fill="none" />
<path d="M1188.600 450 V477.200 H1201.500 Z" fill="#4d87c0"/>
<rect x="1135.0" y="467.5" width="16.5" height="15.5" fill="#3f86c9" />
<rect x="1128.1" y="460.0" width="13.2" height="13.2" fill="#5c5c5c" stroke="#f4f4f4" stroke-width="1"/>
<rect x="1144.8" y="476.6" width="13.2" height="13.5" fill="#5c5c5c" stroke="#f4f4f4" stroke-width="1"/>
<path d="M1172.800 507.500 Q1174.500 492 1182 493.500 Q1186 495 1189 501 Q1192.500 507.500 1197 504.500 Q1200.500 502 1201.800 498" stroke="#222" stroke-width="1.3" fill="none" />
<rect x="1137.8" y="508.2" width="20.0" height="19.5" fill="#5c5c5c" />
<rect x="1128.1" y="498.1" width="20.2" height="20.2" fill="#3f86c9" stroke="#f4f4f4" stroke-width="1"/>
<path d="M1172.800 553 H1201.500 V524.800" stroke="#222" stroke-width="1.3" fill="none" />
<path d="M1172.800 553 V524.800 H1201.500" stroke="#222" stroke-width="1.2" fill="none" stroke-dasharray="2.500 2"/>
<path d="M1172.800 546 L1194.500 524.800" stroke="#7d98b3" stroke-width="1.4" fill="none" />
<rect x="1128.1" y="536.4" width="20.2" height="19.6" fill="#3f86c9" />
<rect x="1137.8" y="546.0" width="20.0" height="19.7" fill="#5c5c5c" stroke="#f4f4f4" stroke-width="1"/>
<path d="M1172.800 591 H1201.500 V562.700" stroke="#222" stroke-width="1.3" fill="none" />
<path d="M1172.800 591 V562.700 H1201.500" stroke="#222" stroke-width="1.2" fill="none" stroke-dasharray="2.500 2"/>
<path d="M1172.800 584 Q1173.5 563.500 1194 562.700" stroke="#7d98b3" stroke-width="1.4" fill="none" />
<path d="M1185.600 603 L1178.500 626" stroke="#222" stroke-width="1.5" fill="none" />
<path d="M1172.500 614 H1178" stroke="#222" stroke-width="1.5" fill="none" />
<path d="M1186 614 H1202" stroke="#9fbcd8" stroke-width="1.5" fill="none" stroke-dasharray="5.500 2.500"/>
<path d="M1174 649 H1186" stroke="#666" stroke-width="1.6" fill="none" />
<path d="M1189 649 L1183.500 645.500 V652.500 Z" fill="#666"/>
<path d="M1172.500 657.700 H1178.500" stroke="#222" stroke-width="1.5" fill="none" />
<path d="M1181 657.700 H1194" stroke="#9fbcd8" stroke-width="1.5" fill="none" stroke-dasharray="4 2"/>
<path d="M1201.700 641 L1195.300 664.500" stroke="#222" stroke-width="1.5" fill="none" />
<path d="M1172.500 686 L1181.500 677.300 H1201.300 L1191.700 686 Z" fill="#555"/>
<rect x="1172.5" y="689.4" width="16.7" height="16.2" fill="#666" />
<path d="M1192.700 687.400 L1201.700 679.300 V698.500 L1192.700 705.500 Z" fill="#4d87c0"/>
<path d="M1179 719.800 H1173.500 Q1172.500 719.800 1172.500 721 V739 Q1172.500 740.400 1173.500 740.400 H1200.500 Q1201.500 740.400 1201.500 739 V721 Q1201.500 719.800 1200.500 719.800 H1195" stroke="#222" stroke-width="1.3" fill="none" />
<rect x="1178.5" y="717.2" width="5.0" height="4.5" fill="#5b84ad" />
<rect x="1190.6" y="717.2" width="5.0" height="4.5" fill="#5b84ad" />
<path d="M1172.500 767 H1182 M1192 767 H1201.800" stroke="#222" stroke-width="1.5" fill="none" />
<path d="M1186 767 L1180 762 L1182 767 L1180 772 Z M1188 767 L1194 762 L1192 767 L1194 772 Z" fill="#4d87c0"/></svg></div><div id="canvas"><svg width="1039" height="627" viewBox="0 0 1039 627" style="position:absolute;left:0;top:0">
<g fill="none" stroke="#fff" stroke-width="1.6">
<path d="M216.00 160.60 L344.39 253.88 L295.35 404.82 L136.65 404.82 L87.61 253.88 Z"/>
<path d="M216.00 248.35 L260.94 281.00 L243.77 333.83 L188.23 333.83 L171.06 281.00 Z"/>
<path d="M216.00 160.60 A102.77 102.77 0 0 0 344.39 253.88"/>
<path d="M344.39 253.88 A102.77 102.77 0 0 0 295.35 404.82"/>
<path d="M295.35 404.82 A102.77 102.77 0 0 0 136.65 404.82"/>
<path d="M136.65 404.82 A102.77 102.77 0 0 0 87.61 253.88"/>
<path d="M87.61 253.88 A102.77 102.77 0 0 0 216.00 160.60"/>
<path d="M173.82 237.55 A87.75 87.75 0 0 0 258.18 237.55"/>
<path d="M258.18 237.55 A87.75 87.75 0 0 0 284.24 317.77"/>
<path d="M284.24 317.77 A87.75 87.75 0 0 0 216.00 367.35"/>
<path d="M216.00 367.35 A87.75 87.75 0 0 0 147.76 317.77"/>
<path d="M147.76 317.77 A87.75 87.75 0 0 0 173.82 237.55"/>
<path d="M742.60 181.90 L870.99 275.18 L821.95 426.12 L663.25 426.12 L614.21 275.18 Z"/>
<path d="M742.60 269.65 L787.54 302.30 L770.37 355.13 L714.83 355.13 L697.66 302.30 Z"/>
<path d="M742.60 181.90 A102.77 102.77 0 0 0 870.99 275.18"/>
<path d="M870.99 275.18 A102.77 102.77 0 0 0 821.95 426.12"/>
<path d="M821.95 426.12 A102.77 102.77 0 0 0 663.25 426.12"/>
<path d="M663.25 426.12 A102.77 102.77 0 0 0 614.21 275.18"/>
<path d="M614.21 275.18 A102.77 102.77 0 0 0 742.60 181.90"/>
<circle cx="742.60" cy="181.90" r="87.75"/>
<circle cx="870.99" cy="275.18" r="87.75"/>
<circle cx="821.95" cy="426.12" r="87.75"/>
<circle cx="663.25" cy="426.12" r="87.75"/>
<circle cx="614.21" cy="275.18" r="87.75"/>
</g>
<g stroke="#ffff00" stroke-width="2" fill="none" shape-rendering="crispEdges">
<path d="M176 302 H254"/>
<path d="M189 297 V312 M244 296 V312"/>
</g>
<text x="199.2" y="298.6" fill="#ffff00" font-family="'Noto Serif CJK SC','Liberation Serif',serif" font-weight="300" font-size="24.3" text-anchor="middle">1</text>
<text x="214.1" y="298.6" fill="#ffff00" font-family="'Noto Serif CJK SC','Liberation Serif',serif" font-weight="300" font-size="24.3" text-anchor="middle">7</text>
<text x="221.6" y="298.6" fill="#ffff00" font-family="'Noto Serif CJK SC','Liberation Serif',serif" font-weight="300" font-size="24.3" text-anchor="middle">,</text>
<text x="235.9" y="298.6" fill="#ffff00" font-family="'Noto Serif CJK SC','Liberation Serif',serif" font-weight="300" font-size="24.3" text-anchor="middle">5</text>
<g stroke="#ffff00" stroke-width="1.8" fill="none">
<path d="M404.6 273.7 L356.6 423.5"/>
<path d="M397.5 271.4 L411.7 276.0 M349.5 421.2 L363.7 425.8"/>
</g>
<g transform="translate(394.5 352.8) rotate(-72.23)"><text x="-6" y="8.3" fill="#ffff00" font-family="'Noto Serif CJK SC','Liberation Serif',serif" font-weight="300" font-size="24.3" text-anchor="middle">5</text><text x="6" y="8.3" fill="#ffff00" font-family="'Noto Serif CJK SC','Liberation Serif',serif" font-weight="300" font-size="24.3" text-anchor="middle">0</text></g>
<g stroke="#fff" stroke-width="1" fill="none" shape-rendering="crispEdges">
<rect x="18.5" y="598.5" width="8" height="8"/>
<path d="M22.5 598.5 V553.0"/>
<path d="M26.5 602.5 H73.0"/>
</g>
<g stroke="#fff" stroke-width="1" fill="none">
<path d="M18.5 563.5 L22.5 553.0 L26.5 563.5 Z"/>
<path d="M20.5 563.5 L22.5 555.0 L24.5 563.5"/>
<path d="M61.5 598.5 L73.0 602.5 L61.5 606.5 Z"/>
<path d="M61.5 600.5 L70.0 602.5 L61.5 604.5"/>
<path d="M19.0 534.5 L22.5 538.0 L29.0 534.0 M22.5 538.0 V543.5"/>
<path d="M82.0 597.5 L91.0 607.0 M91.0 597.5 L82.0 607.0"/>
</g>
<g shape-rendering="crispEdges">
<rect x="788.5" y="588.5" width="221" height="9" fill="none" stroke="#808080"/>
<rect x="819" y="588" width="63" height="5" fill="#808080"/>
<rect x="788" y="593" width="31" height="5" fill="#808080"/>
<rect x="882" y="593" width="128" height="5" fill="#808080"/>
</g>
<text x="819.0" y="585.0" font-family="'Liberation Sans',sans-serif" font-size="11" fill="#808080" text-anchor="middle">10</text>
<text x="1008.0" y="585.0" font-family="'Liberation Sans',sans-serif" font-size="11" fill="#808080" text-anchor="middle">70</text>
<text x="788.0" y="607.0" font-family="'Liberation Sans',sans-serif" font-size="11" fill="#808080" text-anchor="middle">0</text>
<text x="882.0" y="607.0" font-family="'Liberation Sans',sans-serif" font-size="11" fill="#808080" text-anchor="middle">30</text>
<g shape-rendering="crispEdges">
<rect x="792" y="625" width="246" height="1" fill="#fff"/>
<rect x="1037" y="380" width="1" height="246" fill="#fff"/>
<rect x="1038" y="380" width="1" height="247" fill="#6a6a6a"/>
<rect x="0" y="626" width="1039" height="1" fill="#5a5a5a"/>
<rect x="1026.5" y="614.5" width="11" height="11" fill="none" stroke="#fff"/>
</g>
</svg></div><div id="laytabs">
<svg class="icon" style="left:0;top:0" width="300" height="17" viewBox="0 0 300 17">
<rect x="0" y="0" width="300" height="1" fill="#fbfbfb"/>
<rect x="0.500" y="1.500" width="15" height="14" fill="#f2f2f2" stroke="#fbfbfb"/><rect x="15.500" y="1.500" width="15.500" height="14" fill="#f2f2f2" stroke="#fbfbfb"/><path d="M15.500 1 V16 M31.500 1 V16" stroke="#d8d8d8"/>
<path d="M12.500 4.500 V13 L7 8.700 Z" fill="#707070"/><path d="M21 4.500 V13 L26.500 8.700 Z" fill="#707070"/>
<path d="M32.200 0.900 L39.600 16.600 L165.200 16.600 L171.400 1.400 Z" fill="#fbfbfb"/><path d="M32.200 0.900 L39.600 16.600 L72.700 16.600 L78.900 1.400 Z" fill="#fff"/>
<path d="M32.200 0.900 L39.600 16.600 M72.700 16.200 L78.900 1.400 M75.600 10 L78.400 16.200 M117.600 1.700 L123.900 16.200 M119.200 16.200 L121.900 10 M165.200 16.200 L171.400 1.400" stroke="#000" fill="none" stroke-width="1.100"/>
</svg>
<div class="abs lt" style="left:44.500px;top:1.500px">模型</div>
<div class="abs lt" style="left:83.400px;top:1.500px">布局1</div>
<div class="abs lt" style="left:129.600px;top:1.500px">布局2</div>
</div>
<div class="abs" style="left:0;top:810px;width:1211px;height:6px;background:#f4f4f4"></div>
<div id="cmd" class="simsun">
<div class="abs cl" style="left:2px;top:-1px">指定圆弧的第二个点或<span class="hw">&nbsp;</span><span class="hw">[</span>圆心<span class="hw">(</span><span class="hw">C</span><span class="hw">)</span><span class="hw">/</span>端点<span class="hw">(</span><span class="hw">E</span><span class="hw">)</span><span class="hw">]</span><span class="hw">:</span></div>
<div class="abs cl" style="left:2px;top:15px">指定圆弧的端点<span class="hw">:</span></div>
<div class="abs" style="left:0;top:32px;width:1205px;height:1px;background:#a0a0a0"></div>
<div class="abs cl" style="left:2px;top:33px">命令<span class="hw">:</span></div>
<div class="abs" style="left:41px;top:34px;width:2px;height:15px;background:#000"></div>
<div class="abs" style="left:1186px;top:0;width:17px;height:32px;background:#f2f2f2"></div>
<svg class="icon" style="left:1186px;top:0" width="17" height="32" viewBox="0 0 17 32"><path d="M5 10.500 L8.500 7 L12 10.500 M5 21.500 L8.500 25 L12 21.500" stroke="#444" stroke-width="1.700" fill="none"/></svg>
<div class="abs" style="left:1115px;top:35px;width:71px;height:16px;background:#f0f0f0"></div>
<div class="abs" style="left:1131px;top:35px;width:17px;height:16px;background:#cdcdcd"></div>
<svg class="icon" style="left:1115px;top:35px" width="68" height="16" viewBox="0 0 68 16"><path d="M10.500 4.500 L7 8 L10.500 11.500 M61 4.500 L64.500 8 L61 11.500" stroke="#444" stroke-width="1.700" fill="none"/></svg>
<div class="abs" style="left:1186px;top:33px;width:17px;height:20px;background:#f0f0f0"></div>
</div>

<div id="status">
<div class="abs st" style="left:4px;top:4px;width:88px">497988.214760,</div><div class="abs st" style="left:101.700px;top:4px;width:90px">172852.811152,</div><div class="abs st" style="left:200.500px;top:4px;width:51.200px">0.000000</div>
<div class="abs sb" style="left:676px;top:4px">栅格</div>
<div class="abs sb on" style="left:710px;top:2px;width:34px">正交</div>
<div class="abs sb" style="left:748px;top:4px">极轴</div>
<div class="abs sb on" style="left:782px;top:2px;width:58px">对象捕捉</div>
<div class="abs sb on" style="left:842px;top:2px;width:58px">对象追踪</div>
<div class="abs sb on" style="left:902px;top:2px;width:36px">DYN</div>
<div class="abs sb on" style="left:940px;top:2px;width:35px">线宽</div>
<div class="abs sb" style="left:977.500px;top:4px;color:#1a1ac8;font-size:12.150px">提交软件问题或增加新功能</div>
<div class="abs" style="left:1135px;top:3px;width:71px;height:17px;background:#f8f8f8"></div>
<svg class="icon" style="left:1138px;top:4px" width="17" height="14" viewBox="0 0 16 14"><path d="M0 14 L3 0 L6 0 L5 14 Z" fill="#2e9e8e"/><path d="M5 0 L8 0 L11 14 L7.5 14 Z" fill="#1f7a78"/><path d="M9 0 L12 0 L16 14 L12.5 14 Z" fill="#3ab5a0"/><path d="M11 0 L14 0 L12 8 Z" fill="#2a8f86"/></svg>
<div class="abs" style="left:1158px;top:4px;font-size:12.5px;line-height:16px;white-space:pre">MxCAD</div>
</div>
<style>
.lt{font-size:12px;line-height:16px;white-space:nowrap}
.st{font-size:12.3px;line-height:16px;white-space:nowrap;letter-spacing:0.2px}
.cl{font-size:13px;line-height:16px;white-space:nowrap;font-weight:400;font-family:"Liberation Serif","Noto Sans CJK SC",sans-serif}
.hw{display:inline-block;width:6.8px;text-align:center}
.sb{font-size:12.3px;line-height:16px;white-space:nowrap;height:18px}
.sb.on{border:1px solid #3a8fd6;background:#d9eaf9;padding-left:2px;line-height:16px;height:18px;padding-top:0.5px}
</style>
<div class="abs" style="left:1px;top:58px;width:1px;height:813px;background:#7a7a7a"></div>
<div class="abs" style="left:0;top:812px;width:1209px;height:4px;background:linear-gradient(#e6e6e6,#cfcfcf)"></div>
<div class="abs" style="left:1207px;top:82px;width:2px;height:811px;background:#fafafa"></div>
<div class="abs" style="left:1209px;top:0;width:1px;height:893px;background:#6c6c5a"></div><div class="abs" style="left:1210px;top:0;width:1px;height:893px;background:#3c3c28"></div>
<div id="topline"></div>
</div></body></html>
